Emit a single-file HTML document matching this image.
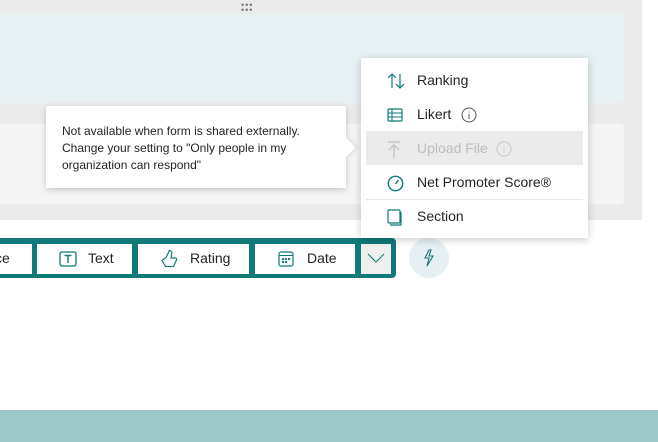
<!DOCTYPE html>
<html><head><style>
body{margin:0;width:658px;height:442px;position:relative;overflow:hidden;background:#fff;font-family:"Segoe UI","Liberation Sans",sans-serif;}
.a{position:absolute}
.mi{position:absolute;left:0;width:227px;height:34px;font-size:14px;color:#252423;}
.mi span{position:absolute;left:56px;top:9px}
.mi svg{position:absolute;left:26px;top:10px}
.btn{position:absolute;top:244px;height:30px;background:#fff;font-size:14px;color:#252423}
</style></head><body>
<div class="a" style="left:0;top:0;width:642px;height:220px;background:#ebebeb"></div>
<div class="a" style="left:241px;top:3px;font-size:9px;line-height:5px;color:#777;letter-spacing:1px">•••<br>•••</div>
<div class="a" style="left:0;top:14px;width:624px;height:89px;background:#e7f0f3;border-radius:0 4px 4px 0"></div>
<div class="a" style="left:0;top:124px;width:624px;height:80px;background:#f4f4f4;border-radius:0 4px 4px 0"></div>
<div class="a" style="left:0;top:410px;width:658px;height:32px;background:#9bc8c8"></div>

<div class="a" style="left:0;top:238px;width:396px;height:40px;background:#0f7a78;border-radius:0 4px 4px 0"></div>
<div class="btn" style="left:0;width:32px;overflow:hidden"><span class="a" style="left:-5px;top:6px">ce</span></div>
<div class="btn" style="left:37px;width:95px">
<svg class="a" style="left:22px;top:7px" width="18" height="16" viewBox="0 0 18 16"><rect x="1" y="1" width="16" height="14" rx="2" fill="none" stroke="#0f7a78" stroke-width="1.3"/><path d="M5.5 4.5h7M9 4.5v7.5" stroke="#0f7a78" stroke-width="1.4" fill="none"/></svg>
<span class="a" style="left:51px;top:6px">Text</span></div>
<div class="btn" style="left:138px;width:111px">
<svg class="a" style="left:23px;top:5px" width="18" height="19" viewBox="0 0 18 19"><path d="M1 11.5l3.5 6h8l3-6.5c.4-1-.3-2-1.3-2H10l.8-4.5c.2-1.5-1-3-2.3-3L5 8.5z" fill="none" stroke="#0f7a78" stroke-width="1.2"/></svg>
<span class="a" style="left:52px;top:6px">Rating</span></div>
<div class="btn" style="left:255px;width:100px">
<svg class="a" style="left:23px;top:7px" width="16" height="16" viewBox="0 0 16 16"><rect x="1" y="1" width="14" height="14" rx="2" fill="none" stroke="#0f7a78" stroke-width="1.2"/><path d="M1 4.5h14" stroke="#0f7a78"/><g fill="#0f7a78"><rect x="4" y="7" width="2" height="2"/><rect x="7" y="7" width="2" height="2"/><rect x="10" y="7" width="2" height="2"/><rect x="4" y="10" width="2" height="2"/><rect x="7" y="10" width="2" height="2"/></g></svg>
<span class="a" style="left:52px;top:6px">Date</span></div>
<div class="btn" style="left:361px;width:30px;background:#f0f0f0">
<svg class="a" style="left:6px;top:9px" width="18" height="10" viewBox="0 0 18 10"><path d="M1 1l8 8 8-8" fill="none" stroke="#0f7a78" stroke-width="1.1"/></svg></div>
<div class="a" style="left:409px;top:238px;width:40px;height:40px;border-radius:50%;background:#e6f0f3">
<svg class="a" style="left:14px;top:11px" width="12" height="18" viewBox="0 0 12 18"><path d="M6 1L2 9h4l-2 8 6-10H6l2-6z" fill="none" stroke="#0f7a78" stroke-width="1.1"/></svg></div>

<div class="a" style="left:46px;top:106px;width:300px;height:82px;background:#fff;box-shadow:0 2px 6px rgba(0,0,0,.18)"></div>
<div class="a" style="left:340px;top:141px;width:13px;height:13px;background:#fff;transform:rotate(45deg);box-shadow:2px -2px 3px rgba(0,0,0,.08)"></div>
<div class="a" style="left:62px;top:123px;font-size:12px;line-height:17px;color:#252423">Not available when form is shared externally.<br>Change your setting to "Only people in my<br>organization can respond"</div>

<div class="a" style="left:361px;top:58px;width:227px;height:180px;background:#fff;box-shadow:0 2px 8px rgba(0,0,0,.2)">
<div class="mi" style="top:5px"><svg width="18" height="16" viewBox="0 0 18 16"><path d="M5 15V1M1 5l4-4 4 4M13 1v14M9 11l4 4 4-4" fill="none" stroke="#0f7a78" stroke-width="1.2"/></svg><span>Ranking</span></div>
<div class="mi" style="top:39px"><svg width="16" height="16" viewBox="0 0 16 16"><rect x="1" y="2" width="14" height="12" rx="1" fill="none" stroke="#0f7a78" stroke-width="1.2"/><path d="M5 2v12M1 6h14M1 10h14" stroke="#0f7a78"/></svg><span>Likert</span><svg style="left:100px;top:10px" width="16" height="16" viewBox="0 0 16 16"><circle cx="8" cy="8" r="7" fill="none" stroke="#555"/><path d="M8 7v5M8 4.5v1" stroke="#555"/></svg></div>
<div class="mi" style="top:73px;left:5px;width:217px;background:#ebebeb;color:#bdbdbd"><svg style="left:21px" width="14" height="18" viewBox="0 0 14 18"><path d="M1 1h12M7 17V4M2 9l5-5 5 5" fill="none" stroke="#c0c0c0" stroke-width="1.2"/></svg><span style="left:51px">Upload File</span><svg style="left:130px;top:10px" width="16" height="16" viewBox="0 0 16 16"><circle cx="8" cy="8" r="7" fill="none" stroke="#c8c8c8"/><path d="M8 7v5M8 4.5v1" stroke="#c8c8c8"/></svg></div>
<div class="mi" style="top:107px"><svg width="17" height="17" viewBox="0 0 17 17"><circle cx="8.5" cy="8.5" r="7.2" fill="none" stroke="#0f7a78" stroke-width="1.4"/><path d="M8.5 9l3-4" stroke="#0f7a78" stroke-width="1.4"/></svg><span>Net Promoter Score®</span></div>
<div class="a" style="left:5px;top:141px;width:217px;height:1px;background:#e8e8e8"></div>
<div class="mi" style="top:141px"><svg width="16" height="17" viewBox="0 0 16 17"><rect x="1" y="1" width="12" height="13" rx="1" fill="none" stroke="#0f7a78" stroke-width="1.2"/><path d="M3 16h11V3" fill="none" stroke="#0f7a78" stroke-width="1.2"/></svg><span>Section</span></div>
</div>
</body></html>
